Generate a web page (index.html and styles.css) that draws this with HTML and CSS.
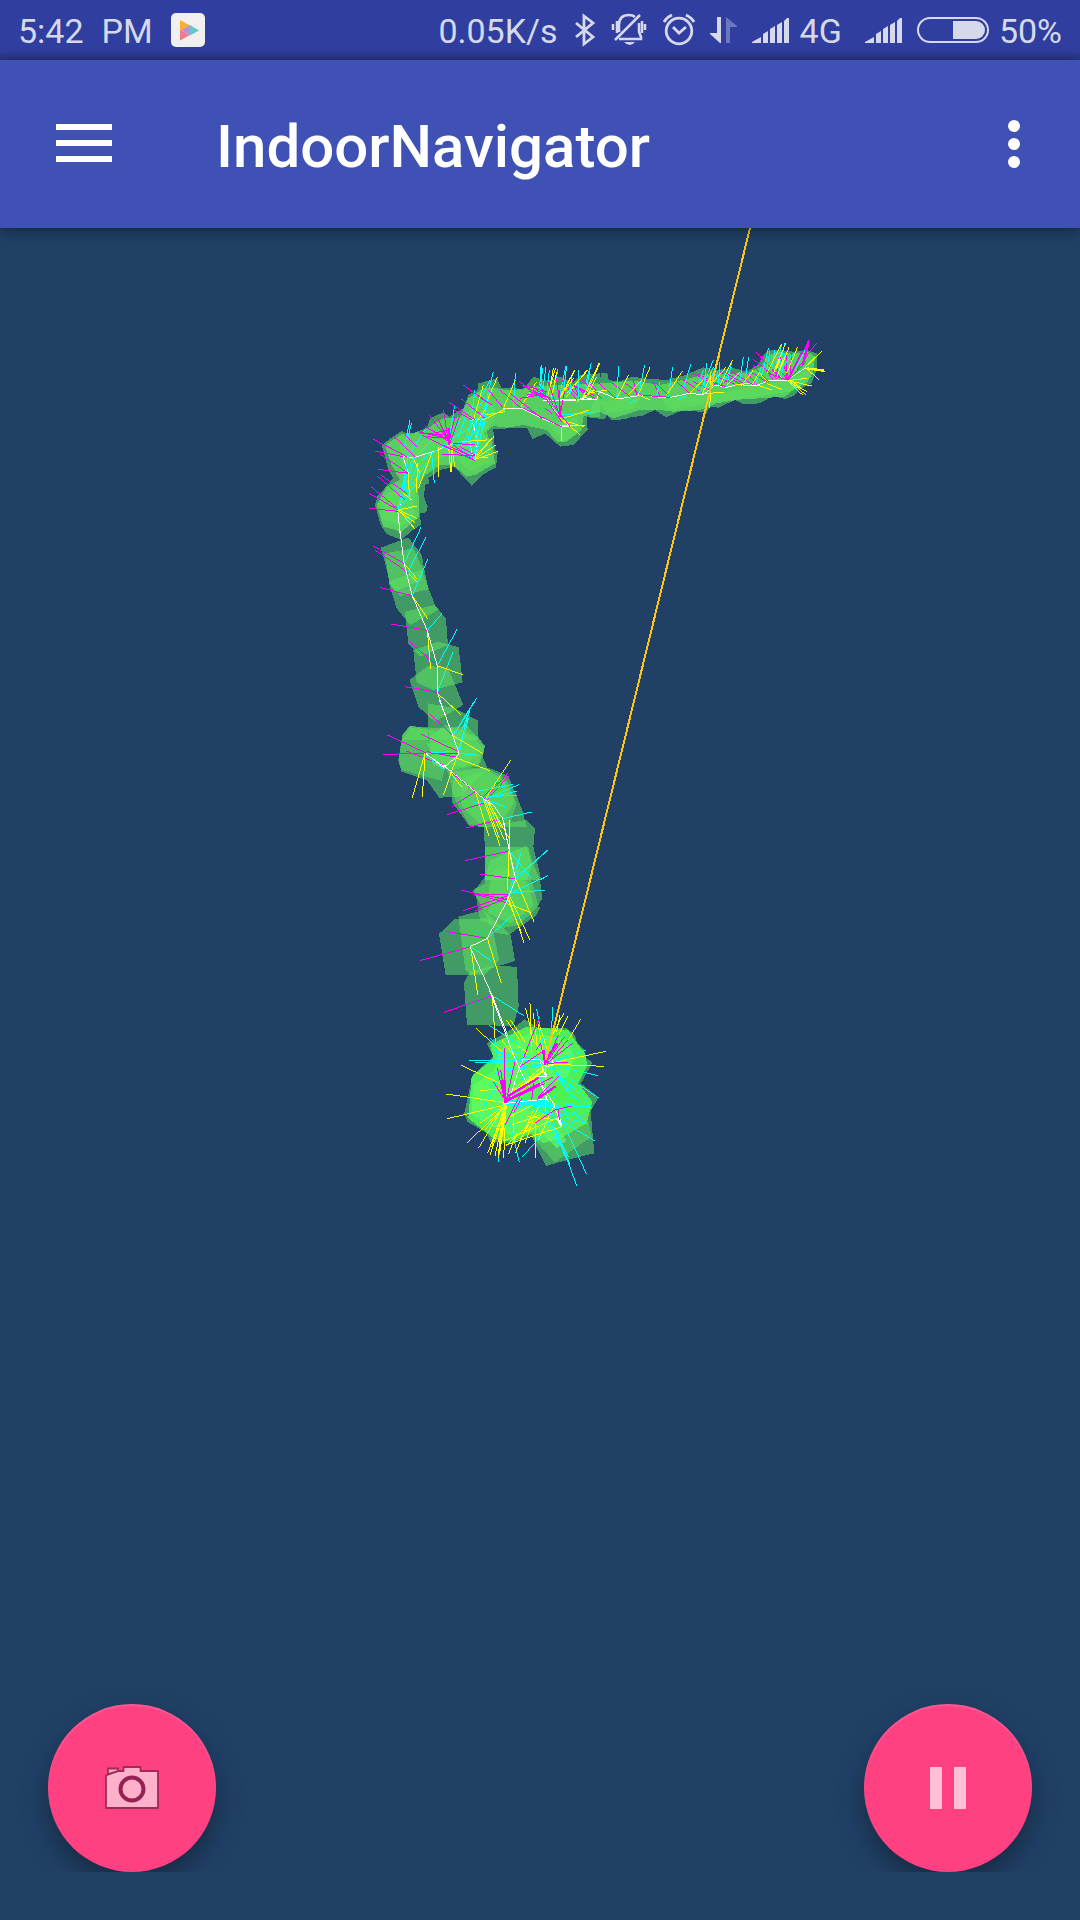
FILE: index.html
```html
<!DOCTYPE html>
<html lang="en">
<head>
<meta charset="utf-8">
<meta name="viewport" content="width=device-width, initial-scale=1">
<title>IndoorNavigator</title>
<link rel="stylesheet" href="styles.css">
</head>
<body>
<div class="status">
  <div class="status-group">
    <span class="clock"><span>5:42</span><span>PM</span></span>
    <svg class="status-icon" width="34" height="60" viewBox="171 0 34 60" aria-hidden="true"><rect x="171" y="13" width="34" height="34" rx="5" fill="#f0f0f0"/><path d="M180 20l10 5.500-10 6z" fill="#fbb034"/><path d="M190 25l9 5.500-9 5z" fill="#63c8cd"/><path d="M180 30l10 5-10 5.500z" fill="#f07b8c"/><path d="M190 25v10l-9-4.500z" fill="#bd8fdc"/></svg>
  </div>
  <div class="status-group status-end">
    <span>0.05K/s</span>
    <svg width="46" height="60" viewBox="558 0 46 60" aria-hidden="true"><path d="M576 23l17 14-9 7V16l9 7-17 14" fill="none" stroke="currentColor" stroke-width="2.800"/></svg>
    <svg width="50" height="60" viewBox="604 0 50 60" aria-hidden="true"><g fill="none" stroke="currentColor" stroke-width="2.500"><path d="M615 40L640 15M619 32v-7q0-10 10-10 4 0 6 2M639 23v9l2 5v2h-22M613 24v6M617 21v12M645 24v6M642 21v12"/></g><path d="M624 42h11q-5 6-11 0" fill="currentColor"/></svg>
    <svg width="50" height="60" viewBox="654 0 50 60" aria-hidden="true"><g fill="none" stroke="currentColor" stroke-width="2.800"><circle cx="679" cy="31" r="12.800"/><path d="M673 27l6 6 7-6M664 22q3-5 8-7M686 15q6 3 8 7"/></g></svg>
    <svg width="40" height="60" viewBox="704 0 40 60" aria-hidden="true"><path d="M717 17h4v26h-1l-10-9v-1h7z" fill="currentColor"/><path d="M726 17l11 9v1h-7v16h-4z" fill="#6b78c0"/></svg>
    <svg width="56" height="60" viewBox="744 0 56 60" aria-hidden="true"><path fill="currentColor" d="M752 42l9-5v6h-9zM763 34l5-3v12h-5zM770 29l5-3v17h-5zM777 25l5-3v21h-5zM784 21l3-3h2v25h-5z"/></svg>
    <span>4G</span>
    <svg width="67" height="60" viewBox="842 0 67 60" aria-hidden="true"><path fill="currentColor" d="M865 42l9-5v6h-9zM876 34l5-3v12h-5zM883 29l5-3v17h-5zM890 25l5-3v21h-5zM897 21l3-3h2v25h-5z"/></svg>
    <svg width="90" height="60" viewBox="909 0 90 60" aria-hidden="true"><rect x="918" y="18" width="70" height="24" rx="12" fill="none" stroke="currentColor" stroke-width="2"/><path d="M953 21h23a9 9 0 0 1 0 18h-23z" fill="currentColor"/></svg>
    <span>50%</span>
  </div>
</div>

<header class="toolbar">
  <button class="icon-button" type="button" aria-label="Open navigation"><svg width="56" height="40" viewBox="0 0 56 40"><path fill="#fff" d="M0 0h56v6H0zM0 16h56v6H0zM0 32h56v6H0z"/></svg></button>
  <h1 class="title">IndoorNavigator</h1>
  <button class="icon-button more" type="button" aria-label="More options"><svg width="12" height="48" viewBox="0 0 12 48"><g fill="#fff"><circle cx="6" cy="6" r="6"/><circle cx="6" cy="24" r="6"/><circle cx="6" cy="42" r="6"/></g></svg></button>
</header>

<main class="scene">
  <svg class="map" viewBox="0 228 1080 1692" preserveAspectRatio="xMidYMin slice" role="img" aria-label="Walked path">
    <!-- upper-left bend -->
    <g transform="translate(360 330) scale(.33333)">
      <path class="cell" d="M65 345L92 325 125 303 152 315 170 305 200 295 210 265 250 247 268 260 310 235 325 195 352 182 355 160 410 146 425 175 455 172 490 180 520 140 560 152 600 140 640 158 660 135 720 130V262L680 262 683 300 640 345 600 350 555 310 518 328 500 293 400 297 404 355 413 368 408 412 372 432 335 467 310 440 284 411 240 420 205 445 208 460 195 465 192 500 203 530 198 547 180 550 183 585 155 602 125 630 80 612 62 585 45 525 52 500 100 445 85 420 75 380Z"/>
      <path class="dense" d="M75 345L125 312 190 305 225 280 250 265 300 262 325 205 370 175 410 175 450 182 520 170 600 165 720 160V245L670 260 665 300 620 335 590 335 560 300 490 285 440 293 400 288 370 310 395 335 405 400 345 435 320 440 280 405 240 405 190 440 175 480 178 560 125 605 70 590 50 525 80 470 120 450 95 405Z"/>
      <path class="glow" d="M120 345L240 320 280 290 345 225 390 215 410 250 380 300 390 345 390 395 330 425 270 370 190 410 165 480 160 565 120 590 65 565 60 510 130 455ZM565 285L655 260 650 310 610 335Z"/>
      <path class="w" d="M122 628L113 540 145 470V430L128 378 158 384 235 360 266 345M335 270L354 330 343 392M330 270L372 268 375 250M430 235H485L550 267 605 289 630 291M545 195L600 260M550 213L650 210 710 209M570 210L580 225M340 390L330 340"/>
      <path class="c" d="M114 540L145 380 200 290M116 535L165 385M118 525L155 455M120 535L180 440M128 470L160 380M132 355L150 270M142 330L154 280M160 385L220 325M185 390L260 340M223 460L216 380M266 340L284 226M280 315L300 265M295 320L315 265M310 340L340 270M325 330L345 180M335 345L370 270M343 390L350 270M340 385L385 245M350 370L390 190M345 350L400 125M360 335L380 220M365 200L390 150M245 350L345 385M290 340L350 385M460 235L466 130M535 200L546 105M545 205L558 110M560 200L568 120M575 205L594 118M600 190L618 108M548 115L540 190M655 205L655 120M675 170L694 98M605 255L720 245M565 155L605 270"/>
      <path class="c" d="M122 520L175 400M128 500L140 430M140 490L200 400M165 470L180 430M270 330L335 290M275 345L320 330M290 370L345 340M300 350L350 300M320 380L350 310M325 345L355 250M345 250L375 200M350 340L365 250M540 110L550 200"/>
      <path class="y" d="M114 540L172 528M115 540L170 565M116 540L164 596M120 545L165 578M130 490L155 510M145 430L148 500M170 485L172 400M160 385L180 430M175 475L215 370M235 440L235 350M255 350L280 340M266 350L272 425M273 345L275 425M276 350L284 410M305 335L380 330M343 388L403 318M343 388L408 345M345 388L415 364M345 385L385 382M350 375L395 325M340 270L370 165M350 275L378 235M370 270L440 235M380 215L412 142M375 255L435 245M430 235L466 150M480 235L530 155M560 210L586 115M570 170L580 115M575 200L590 125M600 200L644 120M620 200L680 120M650 215L705 175M680 190L720 98M607 288L675 285M605 290V332M600 265L660 314M605 270L672 290M610 265L688 240"/>
      <path class="m" d="M28 535L114 544M28 490L114 540M33 470L112 535M52 438L135 510M62 435L140 490M55 418L145 430M60 372L145 430M45 363L130 380M40 328L130 375M75 345L140 380M98 316L165 380M125 303L170 350M180 310L266 316M177 306L262 325M196 290L266 330M208 256L265 330M232 263L266 330M250 240L267 345M285 260L268 330M298 260L268 345M268 217L345 270M280 238L335 270M302 205L375 265M310 165L378 215M330 180L395 225M385 180L430 235M420 180L484 235M478 155L550 205M490 168L555 200M500 192L570 202M507 183L560 210M510 165L580 215M480 205L540 195M245 345L343 390M270 350L340 380M280 340L345 345M450 190L545 265M490 235L605 290M565 155L600 260M545 180L630 290M590 145L604 262M560 210L605 275M618 160L600 260M635 145L660 210M640 165L720 205M185 315L345 392M300 350L345 375M205 312L270 300M650 170L710 210M555 235L575 250"/>
      <path class="m" d="M200 320L266 325M215 300L266 335M240 280L268 340M275 300L266 345M280 345L345 392M245 372L345 378M485 165L560 185M500 175L550 195M520 150L560 190M600 180V262"/>
      <path class="bold m" d="M267 295L268 345"/>
    </g>
    <!-- upper corridor to the right -->
    <g transform="translate(560 330) scale(.33333)">
      <path class="cell" d="M119 160L123 128 142 130 146 150 175 155 218 140 250 145 270 147 320 150 375 136 430 112 475 120 515 113 560 125 600 100 605 80 625 62 660 60 700 65 740 60 770 70 772 115 755 160 715 180 705 195 676 208 640 197 600 220 550 223 525 210 475 233 450 230 440 248 370 240 318 262 285 240 245 258 212 262 192 268 155 270 140 255 135 268 85 262Z"/>
      <path class="dense" d="M119 160L220 152 300 165 390 145 440 132 560 130 605 110 620 80 650 65 700 72 745 65 765 80 760 125 740 160 700 180 675 200 600 205 545 208 470 220 420 240 340 245 300 240 240 240 160 265 119 245Z"/>
      <path class="glow" d="M300 200L450 195 580 170 680 152 740 120 755 140 690 185 590 200 480 215 325 240ZM119 215L240 202 225 235 140 250Z"/>
      <path class="w" d="M0 208L50 210 75 203 110 210 118 185 172 207 250 195 300 202 332 202 388 190 430 194 448 180 465 165 500 172 530 164 582 168 628 152 682 150 735 115M645 130L680 152M460 165L430 180"/>
      <path class="m" d="M5 150L50 210M15 155L60 205M30 160L80 195M60 145L125 205M85 155L115 190M105 150L170 207M148 152L210 200M190 155L250 200M220 150L230 195M280 155L300 200M290 160L332 202M350 155L390 190M370 150L430 190M395 128L465 165M400 155L450 180M410 130L490 170M430 150L500 170M445 130L530 165M470 120L550 168M500 130L550 160M515 125L580 165M555 120L590 165M570 125L620 155M578 105L625 155M580 88L650 145M588 65L655 140M595 105L610 75M600 80L660 140M610 110L640 150M625 130L680 150M668 130L682 150M680 70V150M685 150L740 95M690 140L747 30M685 145L725 65M700 120L745 35M710 120L770 38M695 70L690 140M655 75L650 140M660 80L685 140M250 196L330 202M480 165L505 150"/>
      <path class="c" d="M10 190L20 108M30 190L35 140M55 200V120M80 170L94 98M170 207L176 108M235 195L254 106M290 195L300 155M325 202L338 110M372 170L392 103M415 170L430 120M430 190L440 100M420 190L460 90M440 180L478 80M460 165L475 120M475 165L480 95M490 165L495 130M500 170L515 95M495 150L515 110M540 150L550 80M555 150L566 82M585 165L605 110M605 140L625 55M620 120L630 60M635 120L645 60M650 100L665 45M655 120L675 40M665 135L675 70M665 115L700 70M705 120L735 60M208 220L240 205M355 208L380 197M405 180L435 140M440 165L460 110"/>
      <path class="y" d="M0 205L45 120M15 180L40 145M20 190L85 120M70 200L118 98M85 190L110 140M80 190L140 180M55 212L105 180M170 207L206 135M205 195L245 150M235 195L270 112M270 210L235 195M320 195L368 122M390 190L430 150M425 195L450 145M430 190L492 188M455 160L500 110M450 200L453 125M448 235L453 185M480 165L517 90M500 165L540 125M545 165L580 120M575 165L600 125M590 165L637 180M620 152L600 130M620 130L665 42M640 130L677 40M650 145L670 85M660 120L688 50M680 130L713 50M685 152L755 168M685 152L740 145M685 155L742 185M690 155L738 195M685 155L730 197M690 150L725 175M735 112L785 65M735 110L765 80M735 112L778 150M740 114L790 120M735 115L795 124M620 160L665 178M525 165L570 160"/>
      <path class="bold y" d="M740 115L792 122M648 115L660 85"/>
      <path class="bold m" d="M728 105L746 35M676 146H686"/>
    </g>
    <!-- narrow descent -->
    <g transform="translate(360 520) scale(.33333)">
      <g class="cell">
        <path d="M63 83L145 52 185 105 205 208 120 228 92 195Z"/><path d="M75 100L160 85 190 150 185 180 105 215 88 190Z"/><path d="M85 185L185 150 225 255 235 270 150 315 110 265Z"/><path d="M135 275L225 255 258 297 264 375 180 410 145 370Z"/><path d="M160 390L235 365 296 382 308 487 220 510 170 488Z"/><path d="M148 480L205 437 265 445 310 555 225 605 175 560Z"/><path d="M204 605V550L285 565 354 602V660H210ZM127 645L152 618 204 625V660H127Z"/>
      </g>
      <path class="m" d="M40 78L132 130M45 90L145 158M60 202L157 228M93 312L202 331M150 367L232 437M136 500L232 517M210 582L280 648M183 642L217 658M82 645L110 658"/>
      <path class="c" d="M133 130L183 22M145 155L197 52M157 228L203 118M202 331L248 278M232 437L291 328M232 517L279 396M280 648L350 535M293 660L330 570M310 658L325 595"/>
      <path class="y" d="M142 0L165 26M132 130L172 178M145 158L171 187M157 228L203 297M202 331L212 448M232 437L308 464M232 520L303 584M280 645L298 660"/>
      <path class="w" d="M116 0L122 50 132 130 157 228 202 332 232 437V517L280 655"/>
    </g>
    <!-- middle bends -->
    <g transform="translate(370 700) scale(.33333)">
      <g class="cell">
        <path d="M85 180L97 105 118 78 215 85 323 108 345 138 338 170 353 205 270 290 208 293 170 240 94 215Z"/><path d="M215 85L292 78 345 140 330 190 250 210 185 195 180 110Z"/><path d="M250 215L355 203 415 228 455 325 470 380 350 382 297 377 245 305Z"/><path d="M343 380L470 360 495 385 490 440 514 540H345Z"/><path d="M360 480L470 438 487 495 470 540H345Z"/>
      </g>
      <path class="dense faded" d="M96 120L120 82 190 90 220 105 240 150 215 243 95 210 86 180ZM180 110L225 75 290 95 340 145 325 200 240 210 170 185ZM230 205L265 205 350 205 408 235 440 310 420 370 350 384 300 375 255 300Z"/>
      <path class="glow" d="M170 130L250 125 330 150 285 200 200 195ZM270 235L350 210 400 240 435 305 400 355 325 370 275 320Z"/>
      <path class="m" d="M52 105L170 160M40 163L170 160H265M108 153L220 195M153 102L265 155M180 42L250 108M170 155L262 172M240 215L345 298M220 195L315 273M245 320L316 275M230 344L355 305M288 384L398 356M286 482L418 453M330 522L435 537M345 295L415 218M350 300L417 228M340 290L385 245"/>
      <path class="c" d="M248 108L314 2M262 160L298 35M270 150L285 75M263 160L326 166M168 160L240 155M165 165L225 210M316 275L430 253M345 298L448 253M350 293L440 274M355 290L440 286M345 298L405 320M310 307H350M398 356L485 336M418 453L482 533M430 540L533 450M435 535L452 460M512 540L533 526"/>
      <path class="y" d="M225 0L272 43M250 108L338 160M262 175L360 212M262 165L220 286M165 160L127 293M165 165L157 290M240 215L275 262M345 298L422 180M316 275L356 407M340 298L390 437M345 300L388 415M350 300L403 420M355 305L418 416M355 300L395 385M418 440L412 540M420 455L432 515"/>
      <path class="w" d="M208 0L250 110 267 160 262 168 220 203 168 160M220 195L310 270 345 300 370 315 398 355 418 453 435 540M168 162L230 205"/>
    </g>
    <!-- lower descent -->
    <g transform="translate(400 820) scale(.33333)">
      <g class="cell">
        <path d="M254 80L384 80 397 125 420 180 427 235 412 260 422 260 410 285 326 345 284 338 218 210 255 190Z"/><path d="M175 290L250 270 332 345 345 423 210 465 196 450Z"/><path d="M117 342L163 297 270 295 298 420 255 464 137 465Z"/><path d="M192 490L210 455 275 438 351 440 356 560 340 618 201 614Z"/>
      </g>
      <path class="dense faded" d="M255 170L300 140 375 155 398 190 415 260 355 315 300 325 240 300 225 210Z"/>
      <path class="glow" d="M270 165L345 145 390 200 400 260 330 310 265 280Z"/>
      <path class="m" d="M195 122L328 93M240 162L347 177M184 211L325 240M220 223H325M190 272L325 227M225 272L320 235M235 225L320 248M138 334L262 355M60 422L212 380M132 577L277 527"/>
      <path class="c" d="M347 177L443 91M328 93L392 173M320 245L362 100M325 235L358 150M330 220L443 167M325 220L435 210M262 355L355 270M212 380L274 422M277 527L371 587"/>
      <path class="y" d="M328 0L330 93M326 93L323 210M347 177L402 305M325 230L372 370M330 230L389 359M320 230L365 340M320 250L390 277M262 355L304 490M212 380L233 524M277 527L286 668"/>
      <path class="w" d="M310 0L328 93 347 177 320 245 262 355 210 380 277 527 340 690"/>
    </g>
    <path class="guide" d="M750 228L546 1060"/>
    <!-- starting cluster -->
    <g transform="translate(430 990) scale(.33333)">
      <path class="cell" d="M170 160L250 115 284 88 325 115 410 115 435 135 440 155 463 180 465 200 487 218 453 280 505 322 482 365 493 490 430 505 348 528 305 440 250 460 180 455 172 430 112 395 103 370 128 255 190 200Z"/>
      <path class="blob" d="M180 165L290 110 415 120 438 155 465 190 472 225 445 280 487 335 470 400 400 440 340 460 300 430 250 455 190 445 115 385 125 260 190 205Z"/>
      <path class="dense faded" d="M300 430L470 370 485 440 375 517 340 480Z"/>
      <path class="glow light" d="M205 180L300 130 405 145 435 205 410 265 350 285 290 290 270 340 345 370 375 410 410 450 380 475 325 420 250 440 180 405 125 375 130 285 195 240Z"/>
      <path class="c" d="M178 106L270 165M180 145L230 190M190 180L290 210M118 211H340M135 217L330 215M190 250L340 225M205 240L350 220M320 58L345 190M368 52L362 180M467 180L355 220M503 257L350 220M220 170L330 215M350 220L508 325M355 215L415 310M230 340L470 400M230 335L460 350M225 345L440 340M230 335L400 360M240 330H380M345 350L420 524M375 345L470 553M370 395L440 587M355 370L495 453M360 390L410 510M240 400L268 517M278 500L335 435M210 460L205 517M155 358L200 290M380 250L455 345M370 240L430 325M390 340L485 352M340 330L430 375M270 270L300 250M320 250L375 320M450 300L480 350"/>
      <path class="c" d="M345 375L385 470M370 410L415 500M230 345L400 375M240 335L430 360M350 225L440 300M365 235L450 315M195 185L340 235M200 200L330 205M390 350L430 400M400 330L460 395M180 290L250 250"/>
      <path class="bold c" d="M228 335L350 335M235 342L380 350M330 345L405 355"/>
      <path class="y" d="M138 115L215 185M94 226L220 285M150 303L210 296M48 312L225 338M52 386L225 345M112 458L225 350M145 475L220 350M173 490L225 350M180 495L228 350M188 455L225 350M195 497L228 350M205 505L223 350M221 503L228 350M208 455L220 360M235 493L260 430M256 490L310 360M228 468L310 390M220 453L380 385M228 465L395 410M245 405L330 375M230 90L270 150M242 90L285 155M287 55L310 150M300 40L305 190M310 70L325 190M323 95L340 190M330 110L355 190M360 150L402 68M375 155L414 78M380 125L390 75M415 150L452 88M527 184L350 222M521 229L350 222M318 505L318 400M325 450L375 340M230 315L345 225M228 318L325 265M250 330L310 270M348 225V365M360 215L300 140M260 165L295 190M270 450L330 345M240 380L310 345"/>
      <path class="y" d="M185 470L222 355M165 420L222 350M150 400L222 348M245 320L330 235M250 350L250 430M280 430L340 370M290 380L390 390M215 150L250 195M285 460L310 390"/>
      <path class="bold y" d="M228 345L207 490M230 320L320 265M233 320L342 240M224 340V395"/>
      <path class="w" d="M178 0L245 180 268 235 245 305M268 235L290 280 310 300M275 210H330L350 230 368 225 366 210M345 240L350 260H320L370 340 395 408M228 340L320 330 355 330M265 240L282 205M325 265L355 335M345 255L330 215M380 385L390 405"/>
      <path class="bold w" d="M388 387L393 408"/>
      <path class="m" d="M223 175L225 340M202 235L225 335M212 240L226 335M255 215L228 335M190 275L225 330M345 220L332 160 318 180M330 78L280 205M269 230L345 180M348 220L385 135M348 220L404 140M350 225L413 150M350 220L430 158M350 220L415 217M225 405L270 315M250 370L275 325M230 335L370 260M230 335L345 280M315 400L375 360 425 348M388 390L385 360M325 320L388 257M305 330L310 280M320 330L377 290"/>
      <path class="bold m" d="M223 270L227 340M231 330L330 282M340 180L346 225M231 320L327 263M347 210L382 160M214 270L224 325M325 325L375 290"/>
    </g>
    <path class="guide" d="M554 1026L546 1060"/>
  </svg>
  <div class="actions">
    <button class="fab" type="button" aria-label="Take picture"><svg width="54" height="44" viewBox="0 0 54 44"><path d="M1 9.500L13 5H18.500V1h17v4H53v37H1z" fill="#ffb0cb" stroke="#a02a58" stroke-width="1.800" stroke-linejoin="round"/><path d="M3 8V2.500H13V5Z" fill="#ffb0cb" stroke="#a02a58" stroke-width="1.800"/><circle cx="27" cy="23" r="11.500" fill="#ffb0cb" stroke="#952252" stroke-width="4"/></svg></button>
    <button class="fab" type="button" aria-label="Pause"><svg width="36" height="42" viewBox="0 0 36 42"><path fill="#ffbfd4" d="M0 0h12v42H0zM24 0h12v42H24z"/></svg></button>
  </div>
</main>
</body>
</html>
```
FILE: styles.css
```css
* {
  box-sizing: border-box;
}

body {
  margin: 0;
  min-height: 100vh;
  display: flex;
  flex-direction: column;
  font-family: Roboto, "Liberation Sans", sans-serif;
  background: #204066;
}

svg {
  display: block;
}

button {
  border: 0;
  padding: 0;
  background: none;
  cursor: pointer;
}

.status {
  display: flex;
  justify-content: space-between;
  height: 60px;
  padding: 0 18px;
  background: linear-gradient(#303f9f 50px, #2a3684);
  color: #d6d9ec;
  font-size: 34px;
  line-height: 62px;
  white-space: nowrap;
}

.status-group {
  display: flex;
  gap: 18px;
}

.status-end {
  gap: 0;
}

.clock {
  display: flex;
  gap: 18px;
}

.toolbar {
  position: relative;
  display: flex;
  align-items: center;
  height: 168px;
  padding: 0 60px 0 56px;
  background: #3f51b5;
  box-shadow: 0 2px 12px rgba(0, 0, 0, 0.45);
}

.title {
  flex: 1;
  margin: 0;
  padding: 6px 0 0 104px;
  color: #fff;
  font-size: 60px;
  font-weight: 500;
  line-height: 72px;
}

.scene {
  flex: 1;
  display: grid;
}

.map,
.actions {
  grid-area: 1 / 1;
}

.map {
  width: 100%;
  height: 100%;
  shape-rendering: crispEdges;
}

.map path {
  fill: none;
  stroke-width: 3;
}

.map .cell,
.map .cell path {
  fill: #5fe462;
  fill-opacity: 0.55;
}

.map .dense {
  fill: #60e060;
  fill-opacity: 0.75;
}

.map .faded {
  fill-opacity: 0.5;
}

.map .glow {
  fill: #5be05b;
  fill-opacity: 0.6;
}

.map .blob {
  fill: #50fa56;
  fill-opacity: 0.9;
}

.map .light {
  fill: #66ff68;
}

.map .m {
  stroke: #f0f;
}

.map .c {
  stroke: #0ff;
}

.map .y {
  stroke: #ff0;
}

.map .w {
  stroke: #fff;
}

.map .bold {
  stroke-width: 7;
}

.map .guide {
  stroke: #ffc414;
  stroke-width: 2;
}

.actions {
  align-self: end;
  display: flex;
  justify-content: space-between;
  margin-bottom: 48px;
  padding: 48px 48px 0;
  overflow: hidden;
}

.fab {
  display: grid;
  place-items: center;
  width: 168px;
  height: 168px;
  border-radius: 50%;
  background: #ff4081;
  box-shadow: 0 12px 24px rgba(20, 30, 45, 0.6), inset 0 2px 2px rgba(255, 255, 255, 0.15);
}
```
